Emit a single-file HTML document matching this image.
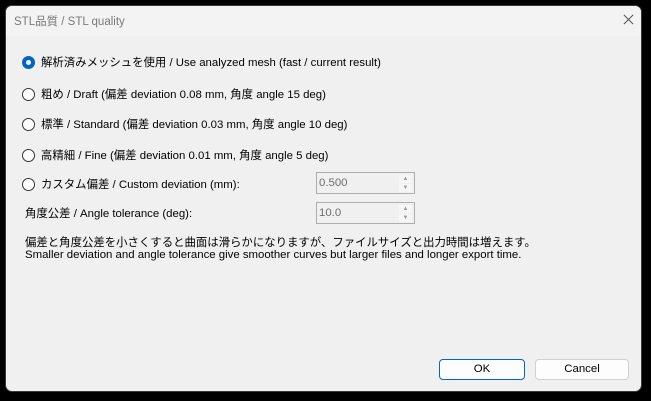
<!DOCTYPE html>
<html><head><meta charset="utf-8"><style>
html,body{margin:0;padding:0;width:651px;height:401px;background:#000;overflow:hidden}
body{font-family:"Liberation Sans","Noto Sans CJK JP",sans-serif;font-size:11.4px;color:#000}
.win{position:absolute;left:5px;top:5px;width:637px;height:387px;background:#f0f0f0;border-radius:7px;overflow:hidden;border:1px solid #3a3a3a;box-sizing:border-box}
.title{position:absolute;left:0;top:0;right:0;height:30px;background:#f3f3f3}
.title span{position:absolute;left:8px;top:7px;color:#7a7a7a;font-size:11.5px}
.close{position:absolute;right:6px;top:7px;width:13px;height:13px}
.t{position:absolute;white-space:nowrap}
.rb{position:absolute;width:11px;height:11px;border:1px solid #333;border-radius:50%;background:#fff}
.rb.on{border-color:#0067c0;background:#0067c0}
.rb.on:after{content:"";position:absolute;left:3px;top:3px;width:5px;height:5px;border-radius:50%;background:#fff}
.spin{position:absolute;width:99px;height:22px;border:1px solid #adadad;background:#f0f0f0;box-sizing:border-box;color:#6d6d6d}
.spin span{position:absolute;left:2px;top:4px}
.arr{position:absolute;right:2px;width:13px;height:8px;background:#f6f6f6;color:#999;font-size:6px;text-align:center;line-height:8px}
.btn{position:absolute;height:21px;border:1px solid #d0d0d0;border-radius:4px;background:#fdfdfd;box-sizing:border-box;text-align:center;line-height:19px}
</style></head><body>
<div class="win">
<div class="title"><span>STL品質 / STL quality</span>
<svg class="close" viewBox="0 0 14 14"><path d="M2 2L12 12M12 2L2 12" stroke="#555" stroke-width="1.1"/></svg></div>
<div class="rb on" style="left:16px;top:50px"></div><div class="t" style="left:35px;top:48px">解析済みメッシュを使用 / Use analyzed mesh (fast / current result)</div>
<div class="rb" style="left:16px;top:82px"></div><div class="t" style="left:35px;top:80px">粗め / Draft (偏差 deviation 0.08 mm, 角度 angle 15 deg)</div>
<div class="rb" style="left:16px;top:112px"></div><div class="t" style="left:35px;top:110px">標準 / Standard (偏差 deviation 0.03 mm, 角度 angle 10 deg)</div>
<div class="rb" style="left:16px;top:143px"></div><div class="t" style="left:35px;top:141px">高精細 / Fine (偏差 deviation 0.01 mm, 角度 angle 5 deg)</div>
<div class="rb" style="left:16px;top:172px"></div><div class="t" style="left:35px;top:170px">カスタム偏差 / Custom deviation (mm):</div>
<div class="spin" style="left:310px;top:166px"><span>0.500</span><div class="arr" style="top:2px">▲</div><div class="arr" style="top:11px">▼</div></div>
<div class="t" style="left:19px;top:199px">角度公差 / Angle tolerance (deg):</div>
<div class="spin" style="left:310px;top:196px"><span>10.0</span><div class="arr" style="top:2px">▲</div><div class="arr" style="top:11px">▼</div></div>
<div class="t" style="left:19px;top:228px">偏差と角度公差を小さくすると曲面は滑らかになりますが、ファイルサイズと出力時間は増えます。</div>
<div class="t" style="left:19px;top:243px">Smaller deviation and angle tolerance give smoother curves but larger files and longer export time.</div>
<div class="btn" style="left:433px;top:353px;width:86px;border-color:#0067c0">OK</div>
<div class="btn" style="left:529px;top:353px;width:94px">Cancel</div>
</div>
</body></html>
